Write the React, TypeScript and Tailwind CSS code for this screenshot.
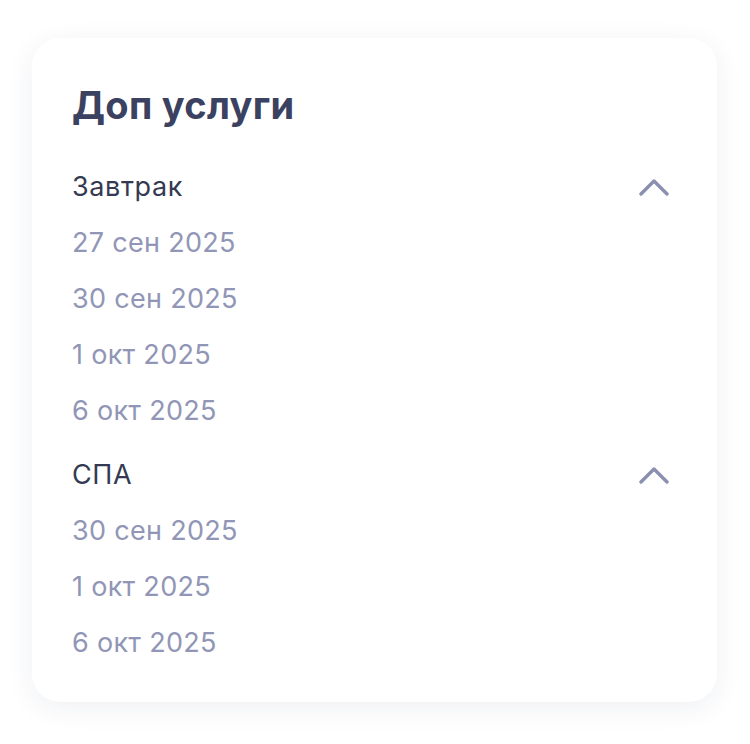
const sections = [
  { title: 'Завтрак', dates: ['27 сен 2025', '30 сен 2025', '1 окт 2025', '6 окт 2025'] },
  { title: 'СПА', dates: ['30 сен 2025', '1 окт 2025', '6 окт 2025'] },
];

function Chevron() {
  return (
    <svg width="30" height="17" viewBox="0 0 30 17" fill="none" className="mr-[8px]">
      <polyline
        points="2,15 15,2 28,15"
        stroke="#8b90b0"
        strokeWidth="3.4"
        strokeLinecap="round"
        strokeLinejoin="round"
      />
    </svg>
  );
}

export default function App() {
  return (
    <div className="min-h-[744px] bg-white pl-8 pt-[38px] font-['Inter',sans-serif]">
      <div className="w-[685px] rounded-[28px] bg-white px-10 pt-[44px] pb-[31px] shadow-[0_6px_28px_rgba(30,40,80,0.07)]">
        <h2 className="text-[38px] font-bold leading-[46px] tracking-[0.3px] text-[#3b4160]">Доп услуги</h2>
        <div className="mt-[31px] flex flex-col gap-2">
          {sections.map((s) => (
            <div key={s.title}>
              <div className="flex h-14 items-center justify-between">
                <span className="text-[27px] tracking-[0.6px] text-[#343a52]">{s.title}</span>
                <Chevron />
              </div>
              {s.dates.map((d) => (
                <div key={d} className="flex h-14 items-center text-[27px] tracking-[0.3px] text-[#9196b6]">
                  {d}
                </div>
              ))}
            </div>
          ))}
        </div>
      </div>
    </div>
  );
}
